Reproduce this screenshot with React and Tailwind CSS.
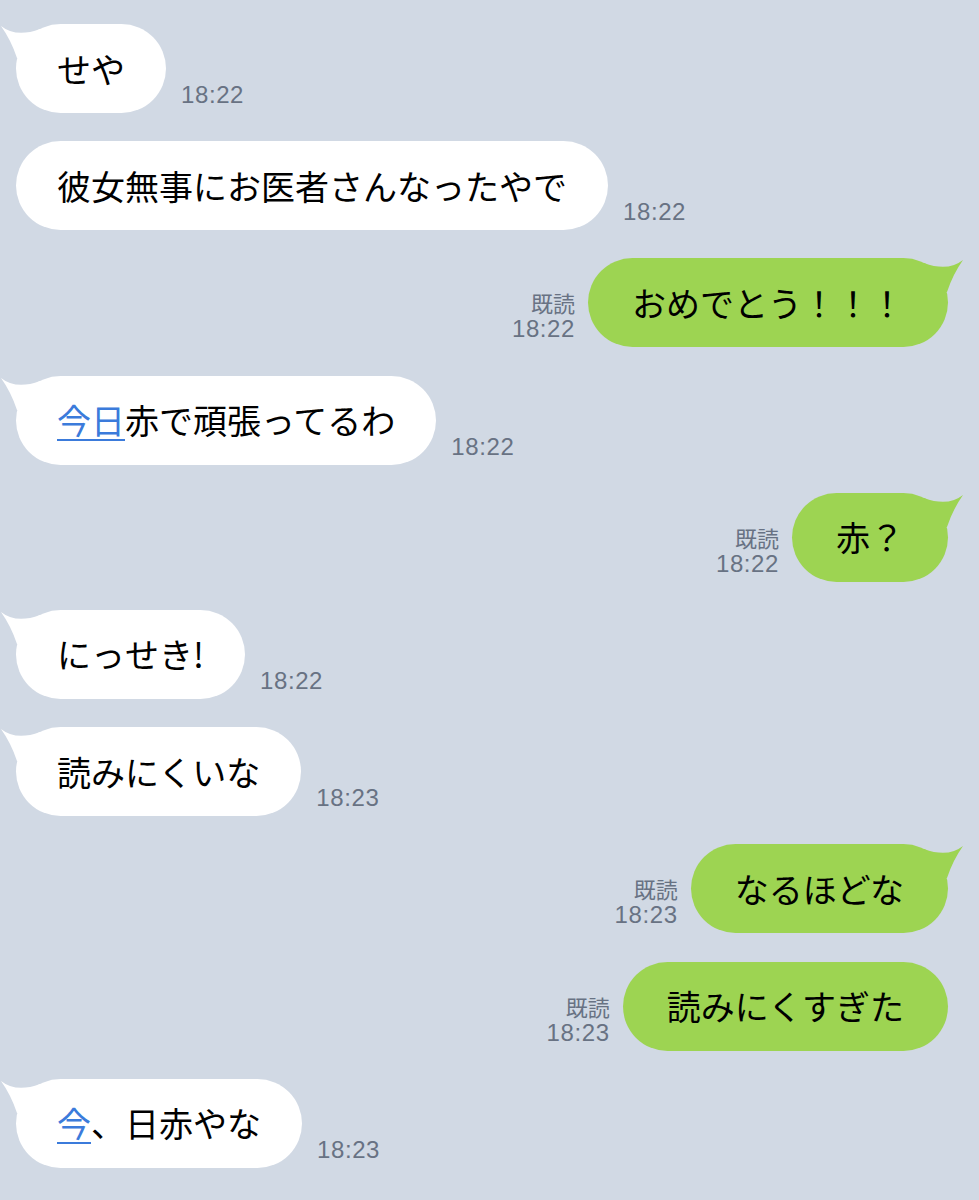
import React from "react";

const messages = [
  { side: "left", tail: true, text: ["せや"], time: "18:22" },
  { side: "left", tail: false, text: ["彼女無事にお医者さんなったやで"], time: "18:22" },
  { side: "right", tail: true, text: ["おめでとう！！！"], time: "18:22" },
  { side: "left", tail: true, text: [{ link: "今日" }, "赤で頑張ってるわ"], time: "18:22" },
  { side: "right", tail: true, text: ["赤？"], time: "18:22" },
  { side: "left", tail: true, text: ["にっせき!"], time: "18:22" },
  { side: "left", tail: true, text: ["読みにくいな"], time: "18:23" },
  { side: "right", tail: true, text: ["なるほどな"], time: "18:23" },
  { side: "right", tail: false, text: ["読みにくすぎた"], time: "18:23" },
  { side: "left", tail: true, text: [{ link: "今" }, "、日赤やな"], time: "18:23" },
];

const jp = { fontFamily: '"Noto Sans CJK JP", "Noto Sans", sans-serif' };
const num = { fontFamily: '"Liberation Sans", Arial, sans-serif' };

// little horn on the top corner of the first bubble in a run
function Tail({ side }) {
  if (side === "left") {
    return (
      <svg
        className="absolute top-0 left-[-16px] overflow-visible"
        width="40"
        height="40"
        viewBox="-16 0 40 40"
      >
        <path d="M -15 2 Q 0 14 24 5 L 24 34 L 1 34 Q -5 16 -15 2 Z" fill="#ffffff" />
      </svg>
    );
  }
  return (
    <svg
      className="absolute top-0 right-[-16px] overflow-visible"
      width="40"
      height="40"
      viewBox="-24 0 40 40"
    >
      <path d="M 15 2 Q 0 14 -24 5 L -24 34 L -1 34 Q 5 16 15 2 Z" fill="#9dd452" />
    </svg>
  );
}

function Bubble({ msg }) {
  const green = msg.side === "right";
  return (
    <div
      className={`relative h-[89px] flex items-center rounded-full text-[34px] leading-none text-black whitespace-nowrap ${
        green ? "bg-[#9dd452] px-[44px]" : "bg-white px-[41px]"
      }`}
      style={jp}
    >
      {msg.tail && <Tail side={msg.side} />}
      <span className="relative">
        {msg.text.map((t, i) =>
          typeof t === "string" ? (
            <span key={i}>{t}</span>
          ) : (
            <span
              key={i}
              className="text-[#3b7bdb] underline decoration-[2px] underline-offset-[5px]"
            >
              {t.link}
            </span>
          )
        )}
      </span>
    </div>
  );
}

function Row({ msg }) {
  if (msg.side === "left") {
    return (
      <div className="flex items-end">
        <Bubble msg={msg} />
        <span
          className="ml-[15px] mb-[6px] text-[24px] leading-[24px] tracking-[0.6px] text-[#687283]"
          style={num}
        >
          {msg.time}
        </span>
      </div>
    );
  }
  return (
    <div className="flex items-end justify-end">
      <div className="mr-[13px] mb-[5px] flex flex-col items-end text-[#687283]">
        <span className="text-[22px] leading-[26px]" style={jp}>
          既読
        </span>
        <span className="text-[24px] leading-[27px] tracking-[0.6px]" style={num}>
          {msg.time}
        </span>
      </div>
      <Bubble msg={msg} />
    </div>
  );
}

export default function App() {
  return (
    <div className="w-[979px] h-[1200px] overflow-hidden bg-[#d1d9e4] pt-[24px] pl-[16px] pr-[31px] flex flex-col gap-[28.2px]">
      {messages.map((m, i) => (
        <Row key={i} msg={m} />
      ))}
    </div>
  );
}
